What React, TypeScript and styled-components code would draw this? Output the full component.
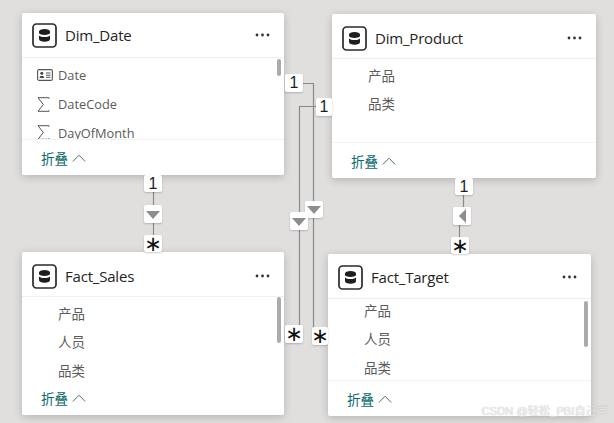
import React from "react";
import styled, { createGlobalStyle } from "styled-components";

const Global = createGlobalStyle`
  html, body { margin: 0; padding: 0; width: 614px; height: 423px; overflow: hidden; background: #e0dfdd; }
  #root { width: 614px; height: 423px; }
`;

const FONT = `"Open Sans", "Noto Sans", "Noto Sans CJK SC", sans-serif`;

const Canvas = styled.main`
  position: relative;
  width: 614px;
  height: 423px;
  background: #e0dfdd;
  overflow: hidden;
  font-family: ${FONT};
`;

const Wires = styled.svg`
  position: absolute;
  left: 0;
  top: 0;
`;

const Card = styled.section<{ $x: number; $y: number; $w: number; $h: number }>`
  position: absolute;
  left: ${(p) => p.$x}px;
  top: ${(p) => p.$y}px;
  width: ${(p) => p.$w}px;
  height: ${(p) => p.$h}px;
  display: flex;
  flex-direction: column;
  background: #fff;
  border-radius: 2px;
  box-shadow: 0 2px 9px rgba(0, 0, 0, 0.2);
`;

const Header = styled.header<{ $shift: number }>`
  flex: none;
  height: 44px;
  box-sizing: content-box;
  display: flex;
  align-items: center;
  gap: 8px;
  padding: 0 14px 0 10px;
  border-bottom: 1px solid #f1f0ef;
  & > * {
    position: relative;
    top: ${(p) => p.$shift}px;
  }
`;

const Title = styled.h2`
  flex: 1;
  margin: 0;
  font-size: 15px;
  font-weight: 500;
  letter-spacing: -0.2px;
  color: #252423;
`;

const Body = styled.div`
  position: relative;
  flex: 1;
  min-height: 0;
  overflow: hidden;
`;

const FieldList = styled.ul<{ $offset: number }>`
  list-style: none;
  margin: ${(p) => p.$offset}px 0 0;
  padding: 0 0 0 15px;
`;

const Field = styled.li<{ $cjk: boolean }>`
  height: 28.8px;
  display: flex;
  align-items: center;
  font-size: ${(p) => (p.$cjk ? 13.5 : 12.8)}px;
  line-height: 1;
  color: #5c5b5a;
`;

const FieldIcon = styled.span`
  flex: none;
  width: 21px;
  display: flex;
  align-items: center;
`;

const Scrollbar = styled.div<{ $top: number; $h: number }>`
  position: absolute;
  right: 3px;
  top: ${(p) => p.$top}px;
  width: 4px;
  height: ${(p) => p.$h}px;
  background: #ababab;
  border-radius: 2px;
`;

const Footer = styled.footer<{ $line: boolean }>`
  flex: none;
  height: 36px;
  box-sizing: border-box;
  display: flex;
  align-items: center;
  gap: 4px;
  padding-left: 19px;
  border-top: 1px solid ${(p) => (p.$line ? "#f3f2f1" : "transparent")};
  color: #0b6a6a;
  font-size: 13.5px;
`;

const Badge = styled.div<{ $x: number; $y: number; $w?: number; $h?: number }>`
  position: absolute;
  left: ${(p) => p.$x}px;
  top: ${(p) => p.$y}px;
  width: ${(p) => p.$w ?? 18}px;
  height: ${(p) => p.$h ?? 18}px;
  display: flex;
  align-items: center;
  justify-content: center;
  background: #fff;
  border-radius: 2px;
  box-shadow: 0 1px 2px rgba(0, 0, 0, 0.2);
  color: #201f1e;
  font-family: "Liberation Sans", sans-serif;
  font-size: 16px;
  line-height: 1;
`;

const Star = styled.span`
  font-family: "DejaVu Sans", sans-serif;
  font-size: 21px;
  line-height: 18px;
  color: #111;
  font-weight: 400;
`;

const TriangleDown = styled.span`
  width: 0;
  height: 0;
  margin-top: 1px;
  border-left: 7px solid transparent;
  border-right: 7px solid transparent;
  border-top: 8px solid #8d8d8d;
`;

const TriangleLeft = styled.span`
  width: 0;
  height: 0;
  border-top: 7px solid transparent;
  border-bottom: 7px solid transparent;
  border-right: 7px solid #8d8d8d;
`;

const Watermark = styled.div`
  position: absolute;
  right: 6px;
  bottom: 5px;
  font-family: "Liberation Sans", "Noto Sans CJK SC", sans-serif;
  font-size: 11.2px;
  color: rgba(255, 255, 255, 0.75);
  text-shadow: 0 0 1px rgba(110, 110, 110, 0.6);
  white-space: nowrap;
`;

const TableIcon = () => (
  <svg width="25" height="25" viewBox="0 0 25 25" style={{ flex: "none" }}>
    <rect x="1" y="1" width="23" height="23" rx="3.5" fill="#fff" stroke="#2b2a29" strokeWidth="1.7" />
    <path
      d="M7 8.6c0-1.6 2.5-2.6 5.5-2.6s5.5 1 5.5 2.6v1.7c-1 1.1-3 1.7-5.5 1.7S8 11.4 7 10.3zM7 12.4c1.2 1 3.2 1.5 5.5 1.5s4.3-.5 5.5-1.5v3.5c0 1.7-2.5 2.8-5.5 2.8s-5.5-1.1-5.5-2.8z"
      fill="#1f1e1d"
    />
  </svg>
);

const Dots = () => (
  <svg width="15" height="4" viewBox="0 0 15 4">
    <circle cx="2" cy="2" r="1.4" fill="#333" />
    <circle cx="7.5" cy="2" r="1.4" fill="#333" />
    <circle cx="13" cy="2" r="1.4" fill="#333" />
  </svg>
);

const Chevron = () => (
  <svg width="14" height="8" viewBox="0 0 14 8">
    <path d="M.8 7.5 7 1.2l6.2 6.3" fill="none" stroke="#4d6f6f" strokeWidth="1" />
  </svg>
);

const IdCardIcon = () => (
  <svg width="16" height="12" viewBox="0 0 16 12">
    <rect x=".6" y=".6" width="14.8" height="10.8" rx="1.5" fill="none" stroke="#555" strokeWidth="1.1" />
    <circle cx="4.8" cy="4.3" r="1.5" fill="#444" />
    <path d="M2.5 9c0-1.5 1-2.3 2.3-2.3S7.1 7.5 7.1 9z" fill="#444" />
    <path d="M9 4h4.5M9 6.2h4.5M9 8.3h4.5" stroke="#555" strokeWidth="1" />
  </svg>
);

const SigmaIcon = () => (
  <svg width="13" height="15" viewBox="0 0 13 15">
    <path d="M12 1.7V.7H1l5.3 6.8L1 14.3h11v-1" fill="none" stroke="#555" strokeWidth="1" />
  </svg>
);

type Kind = "id" | "sum" | "none";

type Table = {
  name: string;
  x: number;
  y: number;
  w: number;
  h: number;
  shift: number;
  offset: number;
  line: boolean;
  fields: { label: string; kind: Kind }[];
  bar?: { top: number; h: number };
};

const tables: Table[] = [
  {
    name: "Dim_Date",
    x: 22,
    y: 13,
    w: 262,
    h: 162,
    shift: 0,
    offset: 3,
    line: true,
    bar: { top: 1, h: 17 },
    fields: [
      { label: "Date", kind: "id" },
      { label: "DateCode", kind: "sum" },
      { label: "DayOfMonth", kind: "sum" },
    ],
  },
  {
    name: "Dim_Product",
    x: 332,
    y: 14,
    w: 264,
    h: 164,
    shift: 2,
    offset: 3,
    line: true,
    fields: [
      { label: "产品", kind: "none" },
      { label: "品类", kind: "none" },
    ],
  },
  {
    name: "Fact_Sales",
    x: 22,
    y: 252,
    w: 262,
    h: 163,
    shift: 2,
    offset: 3,
    line: false,
    bar: { top: 0, h: 46 },
    fields: [
      { label: "产品", kind: "none" },
      { label: "人员", kind: "none" },
      { label: "品类", kind: "none" },
    ],
  },
  {
    name: "Fact_Target",
    x: 328,
    y: 254,
    w: 263,
    h: 162,
    shift: 1,
    offset: -2,
    line: true,
    bar: { top: 2, h: 46 },
    fields: [
      { label: "产品", kind: "none" },
      { label: "人员", kind: "none" },
      { label: "品类", kind: "none" },
    ],
  },
];

const icons: Record<Kind, React.ReactNode> = {
  id: <IdCardIcon />,
  sum: <SigmaIcon />,
  none: null,
};

export default function App() {
  return (
    <Canvas>
      <Global />
      <Wires width="614" height="423" viewBox="0 0 614 423">
        <g fill="none" stroke="#8a8a8a" strokeWidth="1.2">
          <path d="M153.5 175V252" />
          <path d="M302 83.5H313.5V330" />
          <path d="M318 106.5H299.5V330" />
          <path d="M463.5 178V207" />
          <path d="M459.5 225V254" />
        </g>
      </Wires>

      {tables.map((t) => (
        <Card key={t.name} $x={t.x} $y={t.y} $w={t.w} $h={t.h}>
          <Header $shift={t.shift}>
            <TableIcon />
            <Title>{t.name}</Title>
            <Dots />
          </Header>
          <Body>
            <FieldList $offset={t.offset}>
              {t.fields.map((f) => (
                <Field key={f.label} $cjk={f.kind === "none"}>
                  <FieldIcon>{icons[f.kind]}</FieldIcon>
                  {f.label}
                </Field>
              ))}
            </FieldList>
            {t.bar && <Scrollbar $top={t.bar.top} $h={t.bar.h} />}
          </Body>
          <Footer $line={t.line}>
            折叠
            <Chevron />
          </Footer>
        </Card>
      ))}

      <Badge $x={144} $y={175} $h={17}>1</Badge>
      <Badge $x={144} $y={205}><TriangleDown /></Badge>
      <Badge $x={144} $y={235} $h={17}><Star>∗</Star></Badge>

      <Badge $x={285} $y={74}>1</Badge>
      <Badge $x={316} $y={98} $w={16}>1</Badge>
      <Badge $x={305} $y={201} $h={17}><TriangleDown /></Badge>
      <Badge $x={290} $y={212}><TriangleDown /></Badge>
      <Badge $x={285} $y={325}><Star>∗</Star></Badge>
      <Badge $x={312} $y={327} $w={16}><Star>∗</Star></Badge>

      <Badge $x={455} $y={178} $h={17}>1</Badge>
      <Badge $x={453} $y={207}><TriangleLeft /></Badge>
      <Badge $x={451} $y={237} $h={17}><Star>∗</Star></Badge>

      <Watermark>CSDN @轻松_PBI自己学</Watermark>
    </Canvas>
  );
}
